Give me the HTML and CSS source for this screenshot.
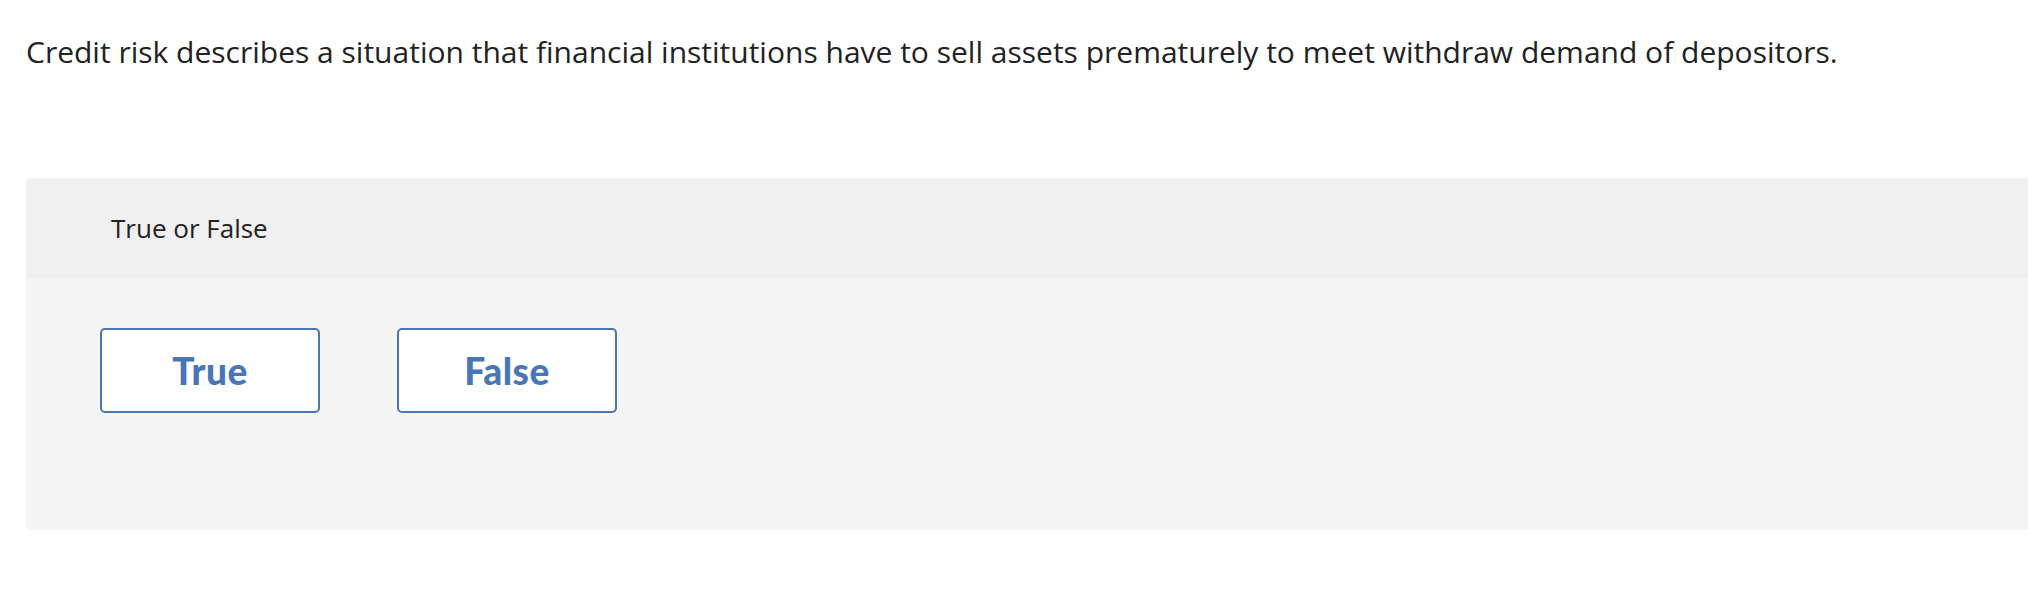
FILE: index.html
```html
<!DOCTYPE html>
<html>
<head>
<meta charset="utf-8">
<link rel="stylesheet" href="styles.css">
</head>
<body>
<div class="page">
  <p class="question">Credit risk describes a situation that financial institutions have to sell assets prematurely to meet withdraw demand of depositors.</p>
  <div class="panel">
    <div class="panel-head">True or False</div>
    <div class="panel-body">
      <button class="choice">True</button>
      <button class="choice">False</button>
    </div>
  </div>
</div>
</body>
</html>
```
FILE: styles.css
```css
html, body {
  margin: 0;
  padding: 0;
  background: #ffffff;
  overflow: hidden;
}
.page {
  font-family: "Open Sans", Lato, sans-serif;
  color: #222222;
  font-variant-ligatures: none;
}
.question {
  margin: 0;
  padding: 32px 0 0 26px;
  font-size: 30px;
  line-height: 40px;
  height: 178px;
  box-sizing: border-box;
}
.panel {
  margin-left: 26px;
  margin-right: -20px;
  border-radius: 4px;
  overflow: hidden;
}
.panel-head {
  background: #f0f0f0;
  height: 100px;
  display: flex;
  align-items: center;
  padding-left: 85px;
  font-size: 26px;
}
.panel-body {
  background: #f5f5f5;
  height: 252px;
  box-sizing: border-box;
  padding: 50px 0 0 74px;
  display: flex;
  align-items: flex-start;
  gap: 77px;
}
.choice {
  width: 220px;
  height: 85px;
  background: #ffffff;
  border: 2px solid #4a76b5;
  border-radius: 5px;
  color: #4876b6;
  font-family: Lato, "Open Sans", sans-serif;
  font-weight: 900;
  font-size: 37px;
  letter-spacing: 0.5px;
  padding: 0;
  cursor: pointer;
}
```
